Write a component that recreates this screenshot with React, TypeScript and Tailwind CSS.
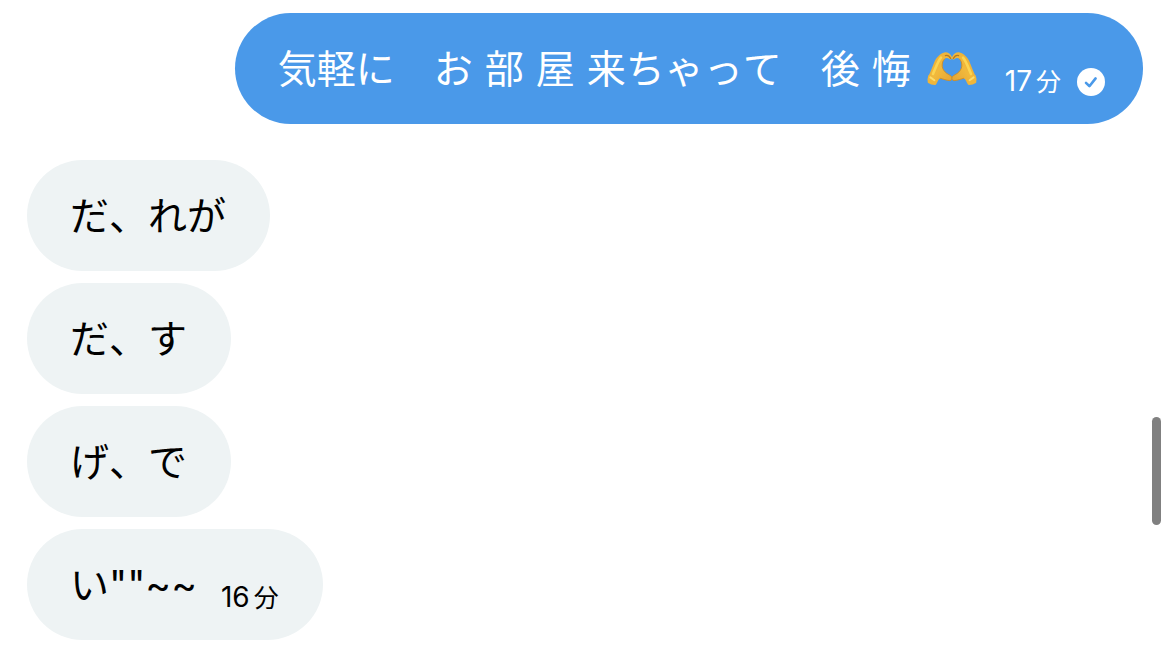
import { ReactNode } from 'react';
import clsx from 'clsx';

interface Message {
  id: number;
  text: string;
  sent?: boolean;
  hands?: boolean;
  minutes?: number;
}

const messages: Message[] = [
  { id: 1, text: '気軽に　お 部 屋 来ちゃって　後 悔', sent: true, hands: true, minutes: 17 },
  { id: 2, text: 'だ、れが' },
  { id: 3, text: 'だ、す' },
  { id: 4, text: 'げ、で' },
  { id: 5, text: 'い""~~', minutes: 16 },
];

function Hand() {
  return (
    <g>
      <path
        d="M1 26 C3.5 21 5.6 15.5 7.6 10.5 C9.4 6.4 13 2.4 17.4 1.4 C20.4 0.8 23.6 3 24.9 6 C25.5 7.6 24.4 9 23 8.4 C21 7 19.4 6.6 18 7.6 C15.8 9.4 15 12.4 15.2 15.2 C15.6 18.4 17.4 20.6 19.8 22.4 C21.4 23.4 23.6 24.4 24.7 25.8 C25.8 27.6 24.8 29.6 22.8 29.6 C19.6 29.4 16 28 13 27.2 C11.6 28.4 10.4 30.8 9 33.6 Z"
        fill="url(#skin)"
      />
      <path
        d="M17.8 7.8 C15.8 9.4 15 12.4 15.2 15.2 C15.6 18.4 17.4 20.6 19.8 22.4 C21.4 23.4 23.6 24.4 24.7 25.8 C25.8 27.6 24.8 29.6 22.8 29.6 C19.6 29.4 16 28 13 27.2"
        fill="none"
        stroke="#cf8f28"
        strokeWidth="1"
      />
      <path d="M18.4 4.6 C20.6 3.8 22.6 5.4 23.6 7.4" fill="none" stroke="#b57a22" strokeWidth="1.3" strokeLinecap="round" />
      <path d="M14 6.6 C11 10 9 16 6 23" fill="none" stroke="#fbd452" strokeWidth="2.6" strokeLinecap="round" />
      <path d="M1.6 24 L10 29.6 L8.6 34 Q4.4 34.2 0.8 31.8 Q0 27.4 1.6 24 Z" fill="#f0b63a" />
      <path d="M3.4 26.4 L7.4 29.2" stroke="#fbdc6c" strokeWidth="2" strokeLinecap="round" />
    </g>
  );
}

function HeartHands() {
  return (
    <svg viewBox="0 0 50 36" role="img" aria-label="ハートの手" className="h-9 w-[50px] shrink-0">
      <defs>
        <linearGradient id="skin" x1="0" y1="0" x2="1" y2="1">
          <stop offset="0" stopColor="#e9a932" />
          <stop offset="0.5" stopColor="#f1b93c" />
          <stop offset="1" stopColor="#e2a233" />
        </linearGradient>
      </defs>
      <Hand />
      <g transform="translate(50 0) scale(-1 1)">
        <Hand />
      </g>
    </svg>
  );
}

function SeenIcon() {
  return (
    <svg viewBox="0 0 28 28" role="img" aria-label="既読" className="size-7 shrink-0">
      <circle cx="14" cy="14" r="14" fill="#fff" />
      <path
        d="M9 14.8 L12.4 18.2 L18.6 10.4"
        fill="none"
        stroke="#4a99e9"
        strokeWidth="2.6"
        strokeLinecap="round"
        strokeLinejoin="round"
      />
    </svg>
  );
}

function Bubble({ sent, children }: { sent?: boolean; children: ReactNode }) {
  return (
    <li
      className={clsx(
        'flex h-[111px] items-center rounded-full pl-[43px] whitespace-nowrap',
        sent ? 'mb-6 self-end bg-[#4a99e9] pr-[38px] text-white' : 'self-start bg-[#eef3f4] pr-11 text-black'
      )}
    >
      {children}
    </li>
  );
}

export default function App() {
  return (
    <main className="relative min-h-screen bg-white px-[27px] pt-[13px] pb-4 font-['Inter','Noto_Sans_CJK_JP',sans-serif] [font-kerning:none]">
      <ul className="flex flex-col gap-3">
        {messages.map((message) => (
          <Bubble key={message.id} sent={message.sent}>
            <p className="flex gap-3 text-[39px] leading-[56px] whitespace-pre">
              {message.text.split(' ').map((word, i) => (
                <span key={i}>{word}</span>
              ))}
            </p>
            {message.hands && (
              <span className="ml-4">
                <HeartHands />
              </span>
            )}
            {message.minutes && (
              <div className={clsx('flex items-center gap-4 pt-[26px]', message.sent ? 'ml-7' : 'ml-6')}>
                <time className="flex items-baseline gap-1 leading-8">
                  <span className="text-[28px]">{message.minutes}</span>
                  <span className="text-[25px]">分</span>
                </time>
                {message.sent && <SeenIcon />}
              </div>
            )}
          </Bubble>
        ))}
      </ul>
      <div className="absolute top-[417px] right-[9px] h-[108px] w-[9px] rounded-full bg-[#808080]" />
    </main>
  );
}
